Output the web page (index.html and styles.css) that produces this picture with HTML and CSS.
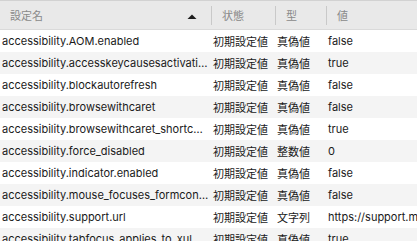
FILE: index.html
```
<!DOCTYPE html>
<html lang="ja">
<head>
<meta charset="utf-8">
<title>about:config</title>
<link rel="stylesheet" href="styles.css">
</head>
<body>
<div class="table">
  <div class="head">
    <div class="hcell first"><span>設定名</span><svg class="sort" width="10" height="5" viewBox="0 0 10 5"><polygon points="0.5,5 9.5,5 5,0.5" fill="#1e1e1e"/></svg></div>
    <div class="hcell"><span>状態</span></div>
    <div class="hcell"><span>型</span></div>
    <div class="hcell"><span>値</span></div>
  </div>
  <div class="row"><div class="name">accessibility.AOM.enabled</div><div class="cjk">初期設定値</div><div class="cjk">真偽値</div><div class="val">false</div></div>
  <div class="row alt"><div class="name">accessibility.accesskeycausesactivation</div><div class="cjk">初期設定値</div><div class="cjk">真偽値</div><div class="val">true</div></div>
  <div class="row"><div class="name">accessibility.blockautorefresh</div><div class="cjk">初期設定値</div><div class="cjk">真偽値</div><div class="val">false</div></div>
  <div class="row alt"><div class="name">accessibility.browsewithcaret</div><div class="cjk">初期設定値</div><div class="cjk">真偽値</div><div class="val">false</div></div>
  <div class="row"><div class="name">accessibility.browsewithcaret_shortcut.enabled</div><div class="cjk">初期設定値</div><div class="cjk">真偽値</div><div class="val">true</div></div>
  <div class="row alt"><div class="name">accessibility.force_disabled</div><div class="cjk">初期設定値</div><div class="cjk">整数値</div><div class="val">0</div></div>
  <div class="row"><div class="name">accessibility.indicator.enabled</div><div class="cjk">初期設定値</div><div class="cjk">真偽値</div><div class="val">false</div></div>
  <div class="row alt"><div class="name">accessibility.mouse_focuses_formcontrol</div><div class="cjk">初期設定値</div><div class="cjk">真偽値</div><div class="val">false</div></div>
  <div class="row"><div class="name">accessibility.support.url</div><div class="cjk">初期設定値</div><div class="cjk">文字列</div><div class="val">https://support.mozilla.org/1/firefox/</div></div>
  <div class="row alt"><div class="name">accessibility.tabfocus_applies_to_xul</div><div class="cjk">初期設定値</div><div class="cjk">真偽値</div><div class="val">true</div></div>
</div>
</body>
</html>
```
FILE: styles.css
```
html, body {
  margin: 0;
  padding: 0;
  background: #ffffff;
  overflow: hidden;
}
body {
  font-family: Inter, "Noto Sans CJK JP", sans-serif;
  font-size: 11px;
  color: #1a1a1a;
}
.table {
  width: 560px;
}
.head {
  display: grid;
  grid-template-columns: 211px 64px 51px 234px;
  align-items: center;
  height: 28px;
  background: #e9e9e9;
  border-top: 1px solid #d2d2d2;
  border-bottom: 1px solid #dadada;
}
.hcell {
  display: flex;
  align-items: center;
  height: 19px;
  padding-left: 10px;
  border-left: 1px solid #c9c9c9;
  color: #8a8a8a;
  font-size: 11px;
}
.hcell.first {
  border-left: none;
  padding-left: 10px;
  padding-right: 14px;
  justify-content: space-between;
}
.sort {
  display: block;
  margin-top: 2px;
}
.row {
  display: grid;
  grid-template-columns: 211px 64px 51px 234px;
  align-items: center;
  height: 22px;
  background: #ffffff;
}
.row.alt {
  background: #f4f4f4;
}
.row > div {
  padding: 0 2px;
  white-space: nowrap;
  overflow: hidden;
  text-overflow: ellipsis;
}
.name {
  padding-left: 2px;
}
.cjk {
  font-size: 11px;
}
.val {
  overflow: visible;
}
```
